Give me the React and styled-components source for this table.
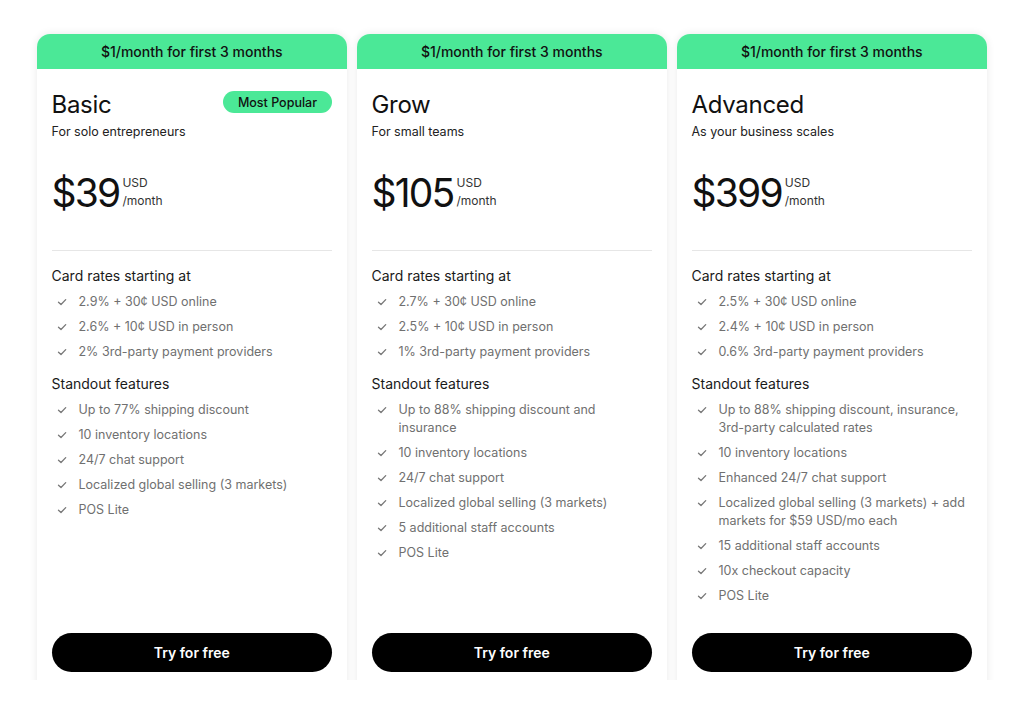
import React from 'react';
import styled, { createGlobalStyle } from 'styled-components';

const GlobalStyle = createGlobalStyle`
  * { box-sizing: border-box; }
  body {
    margin: 0;
    background: #fff;
    font-family: Inter, "Noto Sans", sans-serif;
    color: #111;
    -webkit-font-smoothing: antialiased;
  }
`;

const plans = [
  {
    name: 'Basic',
    tagline: 'For solo entrepreneurs',
    price: '$39',
    popular: true,
    rates: [
      '2.9% + 30¢ USD online',
      '2.6% + 10¢ USD in person',
      '2% 3rd-party payment providers',
    ],
    features: [
      'Up to 77% shipping discount',
      '10 inventory locations',
      '24/7 chat support',
      'Localized global selling (3 markets)',
      'POS Lite',
    ],
  },
  {
    name: 'Grow',
    tagline: 'For small teams',
    price: '$105',
    rates: [
      '2.7% + 30¢ USD online',
      '2.5% + 10¢ USD in person',
      '1% 3rd-party payment providers',
    ],
    features: [
      'Up to 88% shipping discount and insurance',
      '10 inventory locations',
      '24/7 chat support',
      'Localized global selling (3 markets)',
      '5 additional staff accounts',
      'POS Lite',
    ],
  },
  {
    name: 'Advanced',
    tagline: 'As your business scales',
    price: '$399',
    rates: [
      '2.5% + 30¢ USD online',
      '2.4% + 10¢ USD in person',
      '0.6% 3rd-party payment providers',
    ],
    features: [
      'Up to 88% shipping discount, insurance, 3rd-party calculated rates',
      '10 inventory locations',
      'Enhanced 24/7 chat support',
      'Localized global selling (3 markets) + add markets for $59 USD/mo each',
      '15 additional staff accounts',
      '10x checkout capacity',
      'POS Lite',
    ],
  },
];

const Check = () => (
  <svg width="10" height="10" viewBox="0 0 10 10" fill="none">
    <path d="M1.5 5.2 L4 7.5 L8.7 2.6" stroke="#777" strokeWidth="1.3" strokeLinecap="round" strokeLinejoin="round" />
  </svg>
);

const Plan = ({ plan }) => (
  <Card>
    <Banner>$1/month for first 3 months</Banner>
    <Body>
      <TitleRow>
        <Title>{plan.name}</Title>
        {plan.popular && <Badge>Most Popular</Badge>}
      </TitleRow>
      <Tagline>{plan.tagline}</Tagline>
      <PriceRow>
        <Price>{plan.price}</Price>
        <PriceMeta>
          <span>USD</span>
          <span>/month</span>
        </PriceMeta>
      </PriceRow>
      <Divider />
      <SectionTitle>Card rates starting at</SectionTitle>
      <List>
        {plan.rates.map((r) => (
          <Item key={r}>
            <Tick><Check /></Tick>
            <span>{r}</span>
          </Item>
        ))}
      </List>
      <SectionTitle $gap>Standout features</SectionTitle>
      <List>
        {plan.features.map((f) => (
          <Item key={f}>
            <Tick><Check /></Tick>
            <span>{f}</span>
          </Item>
        ))}
      </List>
      <Button>Try for free</Button>
    </Body>
  </Card>
);

const App = () => (
  <>
    <GlobalStyle />
    <Page>
      <Grid>
        {plans.map((p) => (
          <Plan key={p.name} plan={p} />
        ))}
      </Grid>
    </Page>
  </>
);

const Page = styled.div`
  height: 680px;
  overflow: hidden;
  padding: 34px 38px 0 37px;
`;

const Grid = styled.div`
  display: grid;
  grid-template-columns: repeat(3, 309.5px);
  gap: 10.5px;
`;

const Card = styled.div`
  height: 660px;
  display: flex;
  flex-direction: column;
  background: #fff;
  border-radius: 13px 13px 0 0;
  box-shadow: 0 0 9px rgba(0, 0, 0, 0.09);
  overflow: hidden;
`;

const Banner = styled.div`
  height: 35px;
  flex-shrink: 0;
  background: #4be897;
  display: flex;
  align-items: center;
  justify-content: center;
  font-size: 14px;
  font-weight: 500;
  color: #111;
`;

const Body = styled.div`
  flex: 1;
  display: flex;
  flex-direction: column;
  padding: 21px 14.5px 22px;
`;

const TitleRow = styled.div`
  display: flex;
  justify-content: space-between;
  align-items: flex-start;
`;

const Title = styled.div`
  font-size: 24px;
  line-height: 30px;
  font-weight: 400;
  letter-spacing: -0.3px;
`;

const Badge = styled.div`
  height: 22px;
  padding: 0 15px;
  border-radius: 11px;
  background: #4be897;
  font-size: 12.5px;
  font-weight: 500;
  display: flex;
  align-items: center;
  margin-top: 1px;
`;

const Tagline = styled.div`
  margin-top: 3px;
  font-size: 12.5px;
  line-height: 18px;
  color: #222;
`;

const PriceRow = styled.div`
  margin-top: 28px;
  display: flex;
  align-items: flex-start;
  gap: 3px;
`;

const Price = styled.div`
  font-size: 39px;
  line-height: 48px;
  letter-spacing: -1.8px;
  font-weight: 400;
`;

const PriceMeta = styled.div`
  display: flex;
  flex-direction: column;
  font-size: 12px;
  line-height: 18px;
  color: #333;
  padding-top: 5px;
`;

const Divider = styled.div`
  margin-top: 33px;
  height: 1px;
  background: #e6e6e6;
`;

const SectionTitle = styled.div`
  margin-top: ${(p) => (p.$gap ? '13px' : '15px')};
  font-size: 14px;
  line-height: 20px;
  color: #1a1a1a;
`;

const List = styled.ul`
  list-style: none;
  margin: 7px 0 0;
  padding: 0;
  display: flex;
  flex-direction: column;
  gap: 7px;
`;

const Item = styled.li`
  display: flex;
  font-size: 12.5px;
  line-height: 18px;
  color: #707070;
`;

const Tick = styled.span`
  width: 27px;
  flex-shrink: 0;
  display: flex;
  align-items: center;
  height: 18px;
  padding-left: 5px;
`;

const Button = styled.button`
  margin-top: auto;
  height: 39px;
  width: 100%;
  border: none;
  border-radius: 20px;
  background: #000;
  color: #fff;
  font-family: inherit;
  font-size: 14px;
  font-weight: 600;
  cursor: pointer;
`;

export default App;
